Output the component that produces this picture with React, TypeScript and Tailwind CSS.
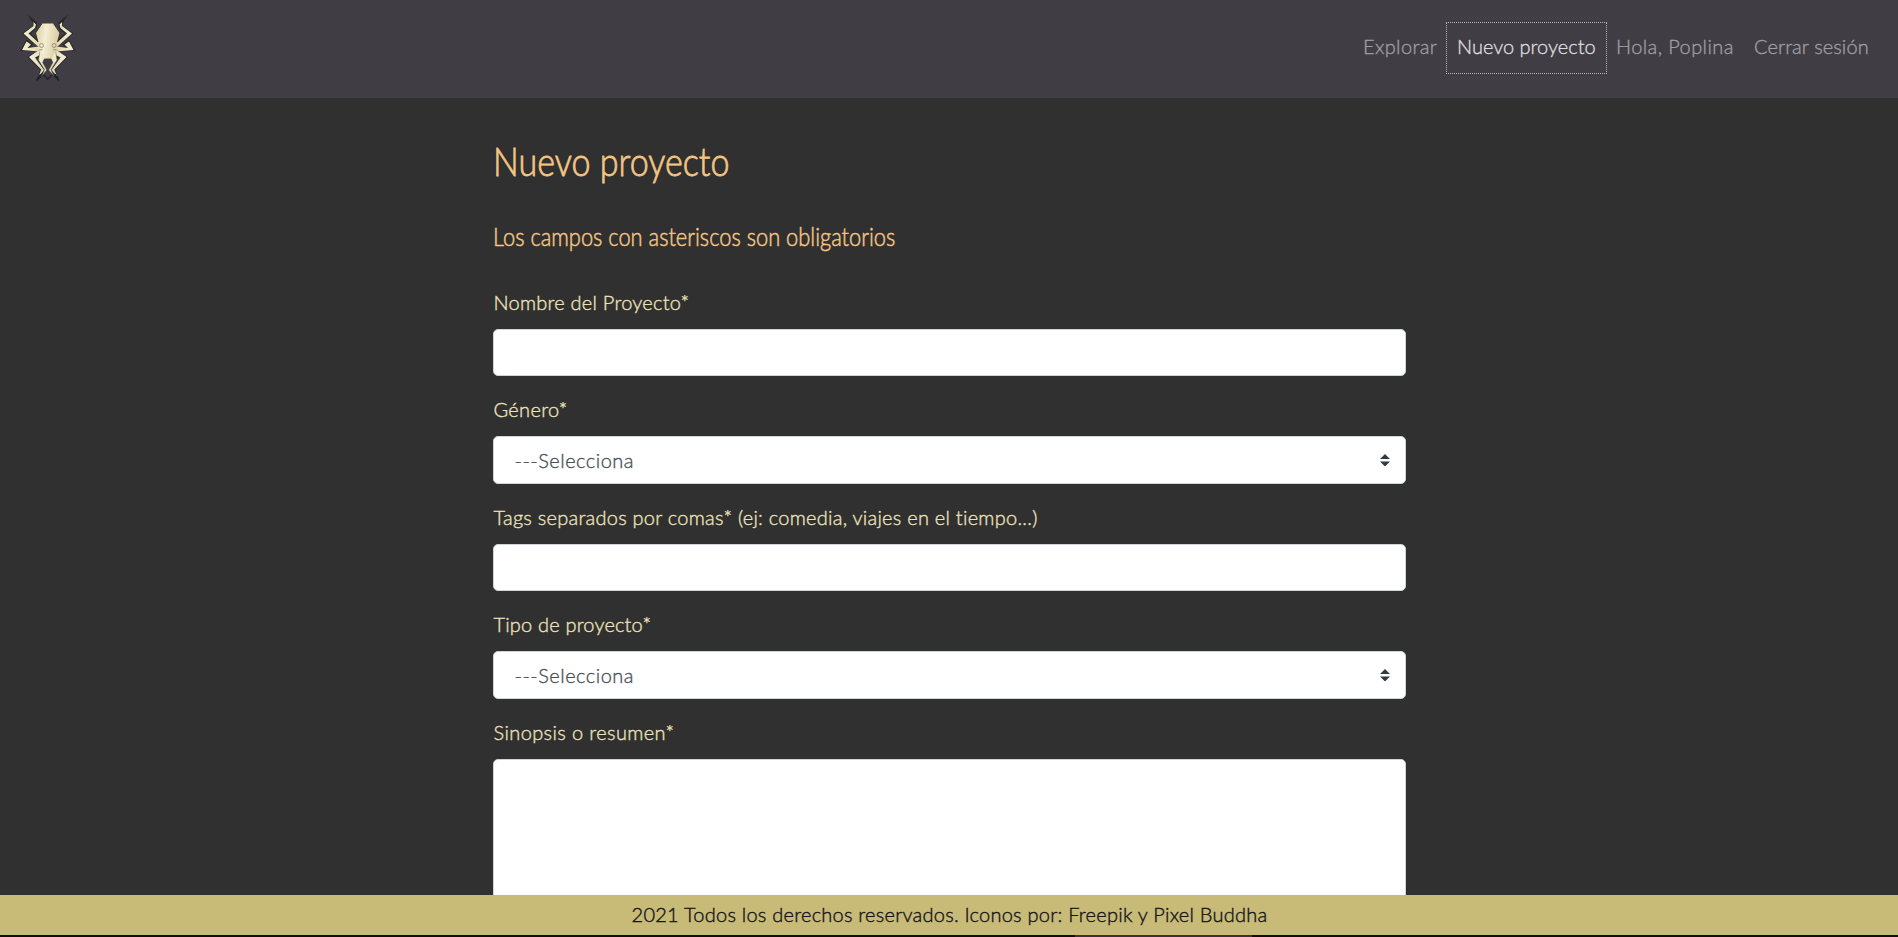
import React from "react";

const labelCls =
  "mb-[13px] pl-px text-[20px] leading-[27px] text-[#ede3bb] [-webkit-text-stroke:0.35px_#ede3bb]";
const headingCls = "text-[#f3c583] [-webkit-text-stroke:0.8px_#f3c583]";

function LogoHalf() {
  return (
    <g>
      <path d="M27.5 14.5 L37 22.5 L36 28 L33.5 24 Z" fill="#25252a" />
      <path d="M33 21 L37 24 L36 29 L30.5 33.5 L40 42 L39 48 L22 33.5 L32.5 26 Z" fill="#28282d" />
      <path d="M33.5 22 L36 24.5 L35 28 L28.5 33.5 L39.5 43.5 L38.5 47 L23.5 33.5 L33.5 26 Z" fill="url(#limb)" />
      <path d="M20 51 L26.5 39.5 L33 44.5 L30 47.5 L39 46.5 L39 51.5 Z" fill="#28282d" />
      <path d="M22 50 L26.5 41.5 L31 44.5 L27.5 48 L39 46.5 L39 51.5 Z" fill="url(#limb)" />
      <path d="M39 50 L27.5 57 L40 69.5 L36.5 80.5 L45 70.5 L36 58.5 L44 53 Z" fill="#28282d" />
      <path d="M39 50 L29 57 L41.2 69.5 L38.5 76.5 L44 70 L35 57.5 L44 53 Z" fill="url(#limb)" />
      <path d="M40 51 L38.5 60 L44.5 69.5 L42 75.5 L46.8 70 L42.6 62.5 L44.5 58.5 L48 58 L48 51 Z" fill="url(#limb)" stroke="#39383a" strokeWidth=".4" />
      <path d="M40.5 74 L36.5 80.5 L41.5 76 M43.5 75 L48 79.5" fill="none" stroke="#202024" strokeWidth="1.2" />
    </g>
  );
}

function Logo() {
  return (
    <svg viewBox="0 0 120 110" className="h-[110px] w-[120px] shrink-0" aria-hidden="true">
      <defs>
        <linearGradient id="body" x1="0" x2="1" y1="0" y2=".2">
          <stop offset="0" stopColor="#d6ca9b" />
          <stop offset=".45" stopColor="#f4eed3" />
          <stop offset="1" stopColor="#d8cb9c" />
        </linearGradient>
        <linearGradient id="limb" x1="0" x2="1">
          <stop offset="0" stopColor="#f6f0d4" />
          <stop offset="1" stopColor="#e3d8ae" />
        </linearGradient>
      </defs>
      <LogoHalf />
      <g transform="translate(95.5 0) scale(-1 1)">
        <LogoHalf />
      </g>
      <path d="M42 23.5 H53.5 L60 33 L57.5 42 L57 51 L52.5 55 L51.5 58.5 H44 L43 55 L38.5 51 L38 42 L35.5 33 Z" fill="url(#body)" />
      <path d="M42 23.5 L35.5 33 L38 42 M53.5 23.5 L60 33 L57.5 42" fill="none" stroke="#2b2b2f" strokeWidth=".9" />
      <g fill="none" stroke="#8c876f" strokeWidth=".8">
        <circle cx="41.5" cy="45.5" r="2" />
        <circle cx="54" cy="45.5" r="2" />
        <path d="M39 50 L42.5 49.5 M56.5 50 L53 49.5" />
      </g>
    </svg>
  );
}

function Arrows() {
  return (
    <svg viewBox="0 0 4 5" className="h-[12.5px] w-[10px]" aria-hidden="true">
      <path fill="#343a40" d="M2 0L0 2h4zm0 5L0 3h4z" />
    </svg>
  );
}

function Field({ label, tracking, select }: { label: string; tracking: string; select?: boolean }) {
  return (
    <div className="mb-5">
      <div className={labelCls}>
        <span className={tracking}>{label}</span>
      </div>
      {select ? (
        <div className="flex h-12 items-center justify-between rounded-[5px] border border-[#ced4da] bg-white pl-[21px] pr-[15px] text-[20px] leading-[28px] tracking-[0.5px] text-[#495057] [-webkit-text-stroke:0.35px_#495057]">
          <span className="pb-px">---Selecciona</span>
          <Arrows />
        </div>
      ) : (
        <div className="h-[47px] rounded-[5px] border border-[#ced4da] bg-white" />
      )}
    </div>
  );
}

export default function App() {
  return (
    <div className="flex h-[937px] flex-col overflow-hidden bg-[#303030] font-['Lato',sans-serif] font-light">
      <nav className="flex h-[98px] shrink-0 items-start justify-between overflow-hidden bg-[#413d45]">
        <Logo />
        <div className="mt-[22px] mr-[19px] flex h-[52px] whitespace-nowrap text-[20px] leading-[49px] text-[#9f9ea1] [-webkit-text-stroke:0.35px]">
          <span className="w-[92px] pl-[9px] tracking-[0.37px]">Explorar</span>
          <span className="w-[161px] border border-dotted border-[#b5b4b7] pl-[10px] leading-[47px] text-[#dddcdf]">Nuevo proyecto</span>
          <span className="w-[137px] pl-[9px] tracking-[0.4px]">Hola, Poplina</span>
          <span className="w-[135px] pl-[10px] tracking-[0.1px]">Cerrar sesión</span>
        </div>
      </nav>
      <main className="mx-auto min-h-0 w-[913px] flex-1 overflow-hidden pt-[39px]">
        <h1 className={headingCls + " text-[40px] leading-[48px]"}>
          <span className="inline-block origin-left scale-x-[0.853]">Nuevo proyecto</span>
        </h1>
        <h2 className="mt-[36px] mb-[38px] text-[25px] leading-[30px] text-[#f3c583] [-webkit-text-stroke:0.5px_#f3c583]">
          <span className="inline-block origin-left scale-x-[0.874]">Los campos con asteriscos son obligatorios</span>
        </h2>
        <Field label="Nombre del Proyecto*" tracking="tracking-[0.24px]" />
        <Field label="Género*" tracking="tracking-[0.3px]" select />
        <Field label="Tags separados por comas* (ej: comedia, viajes en el tiempo...)" tracking="tracking-[0.25px]" />
        <Field label="Tipo de proyecto*" tracking="tracking-[0.18px]" select />
        <div className={labelCls}>
          <span className="tracking-[0.38px]">Sinopsis o resumen*</span>
        </div>
        <div className="h-[200px] rounded-[5px] border border-[#ced4da] bg-white" />
      </main>
      <footer className="h-[40px] shrink-0 bg-[#c8bb78] pl-px text-center text-[20px] leading-[39px] tracking-[0.24px] text-[#17151a] [-webkit-text-stroke:0.4px_#17151a]">
        <span>2021 Todos los derechos reservados. Iconos por: Freepik y Pixel Buddha</span>
      </footer>
      <div className="flex h-[2px] shrink-0 bg-[#0f0d10]">
        <div className="ml-[1075px] w-[177px] bg-[#373336]" />
      </div>
    </div>
  );
}
